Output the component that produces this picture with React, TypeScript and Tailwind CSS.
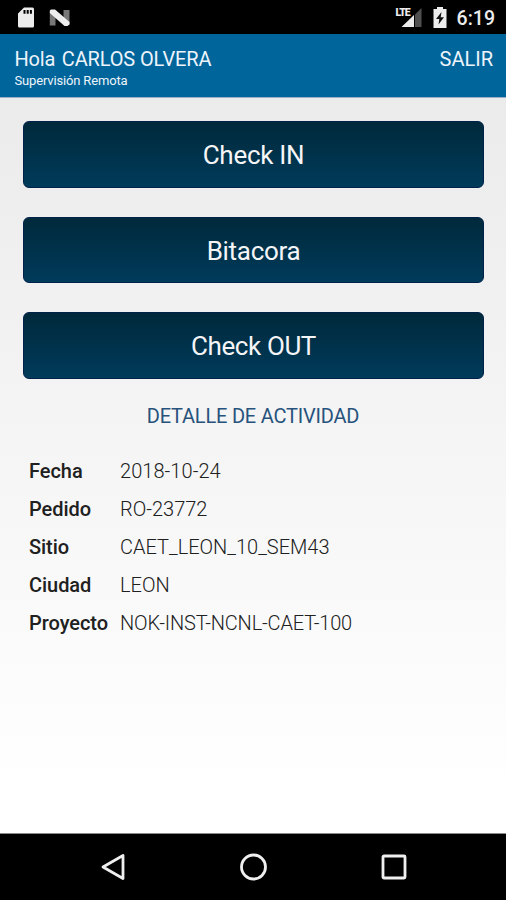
const actions = [
  { label: 'Check IN', spacing: 'tracking-[-0.3px]' },
  { label: 'Bitacora', spacing: 'tracking-[-0.3px]' },
  { label: 'Check OUT', spacing: 'tracking-[-0.4px]' },
];

const details = [
  { name: 'Fecha', value: '2018-10-24', spacing: 'tracking-[0.05px]' },
  { name: 'Pedido', value: 'RO-23772', spacing: 'tracking-[0px]' },
  { name: 'Sitio', value: 'CAET_LEON_10_SEM43', spacing: 'tracking-[0px]' },
  { name: 'Ciudad', value: 'LEON', spacing: 'tracking-[0px]' },
  { name: 'Proyecto', value: 'NOK-INST-NCNL-CAET-100', spacing: 'tracking-[-0.17px]' },
];

function StatusBar() {
  return (
    <div className="flex h-[34px] shrink-0 items-center bg-black pl-[18px] pr-[11px] text-[#ececec]">
      <svg width="17" height="21" viewBox="0 0 17 21" fill="currentColor">
        <path fillRule="evenodd" d="M6 .5h8.500Q16 .5 16 2v17q0 1.500-1.500 1.500h-13Q0 20.500 0 19V6.500ZM5.500 3v3.800h2V3Zm3.200 0v3.800h2V3Zm3.200 0v3.800h2V3Z" />
      </svg>
      <svg className="ml-[14px]" width="22" height="19" viewBox="0 0 22 19">
        <path d="M.8 4 6.500 8v9.500H.8ZM14.500 2h6v14.500l-6-5Z" fill="#777" />
        <path d="M2 1.500h4L20.500 14v2.500L18.500 18H15.500L.8 5V2.500Z" fill="#eee" />
      </svg>
      <div className="relative ml-auto h-[22px] w-[27px]">
        <span className="absolute left-0 top-[2px] text-[10.500px] font-black leading-[10px] tracking-[-1px]">LTE</span>
        <svg className="absolute inset-0" width="27" height="22" viewBox="0 0 27 22">
          <path d="M25.500 2v19H19V8.500Z" fill="#505050" />
          <path d="M18 9v12H5.500Z" fill="currentColor" />
        </svg>
      </div>
      <svg className="ml-[10px]" width="14" height="21" viewBox="0 0 14 21">
        <path d="M4 0h6v2h3.500v19H.5V2H4Z" fill="currentColor" />
        <path d="M8.500 5 3 12h3.300L5.500 17.500 11 10.300H7.700Z" fill="#111" />
      </svg>
      <span className="ml-[10px] pt-[3px] text-[19.500px] font-medium leading-[22px]">6:19</span>
    </div>
  );
}

export default function App() {
  return (
    <div className="flex h-[900px] w-[506px] flex-col overflow-hidden bg-black font-['Roboto',sans-serif]">
      <StatusBar />
      <header className="flex h-[64px] shrink-0 justify-between border-b border-[#9dafc4] bg-[#00659a] pl-[14.500px] pr-[13px] pt-[13px] text-[#eef4fc]">
        <div>
          <div className="flex gap-[6.500px] text-[20px] leading-6 tracking-[-0.15px]">
            <span>Hola</span>
            <span>CARLOS OLVERA</span>
          </div>
          <div className="text-[13px] leading-[19px] tracking-[-0.16px]">Supervisión Remota</div>
        </div>
        <button className="h-6 text-[20px] leading-6">SALIR</button>
      </header>
      <main className="flex h-[736px] shrink-0 flex-col border-b border-[#8a8a8a] bg-linear-to-b from-[#ebebeb] to-white to-95% px-[23px] pt-[23px]">
        <div className="flex flex-col gap-[29px]">
          {actions.map(({ label, spacing }) => (
            <button
              key={label}
              className={`h-[66.500px] w-[461px] rounded-[6px] border border-[#00214a] bg-linear-to-b from-[#00293b] to-[#003b5b] pt-[2px] text-[26px] leading-8 text-[#f5f5f8] ${spacing}`}
            >
              {label}
            </button>
          ))}
        </div>
        <h2 className="mt-[25px] text-center text-[20px] leading-6 tracking-[-0.2px] text-[#27527c]">DETALLE DE ACTIVIDAD</h2>
        <dl className="mt-[24px] pl-[6px] text-[20px] leading-[38px] text-[#202020]">
          {details.map(({ name, value, spacing }) => (
            <div key={name} className="flex h-[38px]">
              <dt className="w-[91px] font-medium tracking-[-0.05px]">{name}</dt>
              <dd className={`whitespace-nowrap font-light ${spacing}`}>{value}</dd>
            </div>
          ))}
        </dl>
      </main>
      <nav className="flex h-[66px] shrink-0 items-center justify-between bg-black pl-[99px] pr-[99px] text-[#efefef]">
        <svg width="27" height="30" viewBox="0 0 27 30" fill="none" stroke="currentColor" strokeWidth="2.800">
          <path d="M24 3.500v23L4 15Z" strokeLinejoin="round" />
        </svg>
        <svg width="28" height="28" viewBox="0 0 28 28" fill="none" stroke="currentColor" strokeWidth="2.800">
          <circle cx="13.500" cy="14" r="12" />
        </svg>
        <svg width="26" height="26" viewBox="0 0 26 26" fill="none" stroke="currentColor" strokeWidth="2.800">
          <rect x="2" y="2" width="22" height="22" rx="1" />
        </svg>
      </nav>
    </div>
  );
}
